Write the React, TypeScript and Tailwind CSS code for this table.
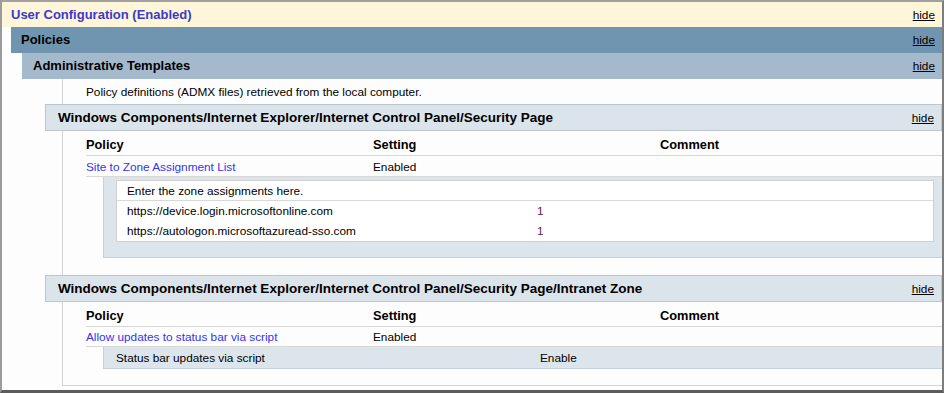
function Hide() {
  return <span className="text-[11.8px] font-normal leading-[14px] text-black underline">hide</span>;
}

function CategoryHeader({ title, className = '' }: { title: string; className?: string }) {
  return (
    <div
      className={`-ml-[18px] flex h-[27px] items-center justify-between border border-[#bcc6cf] bg-[#dce4eb] pl-[12px] pr-[7px] ${className}`}
    >
      <span className="text-[13.5px] font-bold leading-[16px] text-black">{title}</span>
      <Hide />
    </div>
  );
}

function TableHead() {
  return (
    <div className="grid h-[25px] grid-cols-[287px_287px_1fr] border-b border-[#d8d8d8] pt-[6px] text-[12.8px] font-bold leading-[16px] text-black">
      <span>Policy</span>
      <span>Setting</span>
      <span>Comment</span>
    </div>
  );
}

function PolicyRow({ name, setting, h, pt }: { name: string; setting: string; h: string; pt: string }) {
  return (
    <div className={`grid grid-cols-[287px_287px_1fr] border-b border-[#d8d8d8] leading-[14px] ${h} ${pt}`}>
      <span className="text-[#3333f0]">{name}</span>
      <span>{setting}</span>
      <span />
    </div>
  );
}

const zones = [
  { site: 'https://device.login.microsoftonline.com', value: '1' },
  { site: 'https://autologon.microsoftazuread-sso.com', value: '1' },
];

export default function App() {
  return (
    <div className="h-[393px] w-[944px] overflow-hidden border-t-2 border-r-2 border-b-[3px] border-l-2 border-t-[#a0a0a0] border-r-[#7d7d7d] border-b-[#5c5c5c] border-l-[#9b9b9b] bg-[#fdfdfd] font-['Liberation_Sans',Arial,sans-serif] text-[11.8px] text-black">
      {/* User Configuration */}
      <div className="flex h-[25px] items-center justify-between bg-[#fff6d9] pl-[9px] pr-[7px]">
        <span className="text-[13px] font-bold leading-[16px] text-[#3a3acc]">User Configuration (Enabled)</span>
        <Hide />
      </div>

      <div className="pl-[9px]">
        {/* Policies */}
        <div className="flex h-[26px] items-center justify-between bg-[#7095b0] pl-[10px] pr-[7px]">
          <span className="text-[13px] font-bold leading-[16px]">Policies</span>
          <Hide />
        </div>

        <div className="pl-[11px]">
          {/* Administrative Templates */}
          <div className="flex h-[26px] items-center justify-between bg-[#a4b9cb] pl-[11px] pr-[7px]">
            <span className="text-[13px] font-bold leading-[16px]">Administrative Templates</span>
            <Hide />
          </div>

          <div className="ml-[40px] h-[307px] border-b border-l border-[#d4d4d4]">
            <div className="h-[25px] pl-[23px] pt-[6px] leading-[14px]">
              Policy definitions (ADMX files) retrieved from the local computer.
            </div>

            <CategoryHeader title="Windows Components/Internet Explorer/Internet Control Panel/Security Page" />
            <div className="ml-[23px]">
              <TableHead />
              <PolicyRow name="Site to Zone Assignment List" setting="Enabled" h="h-[21px]" pt="pt-[4px]" />
              <div className="ml-[17px] border-b border-l border-[#c9d0d6] bg-[#dde5ec] pb-[15px] pl-[12px] pr-[8px] pt-[3px]">
                <div className="border border-[#d0d0d0] bg-white">
                  <div className="h-[20px] border-b border-[#d8d8d8] pl-[10px] pt-[3px] leading-[14px]">
                    Enter the zone assignments here.
                  </div>
                  {zones.map((z) => (
                    <div key={z.site} className="flex h-[20px] pl-[10px] pt-[3px] leading-[14px]">
                      <span className="w-[410px]">{z.site}</span>
                      <span className="text-[#5a1a5a]">{z.value}</span>
                    </div>
                  ))}
                </div>
              </div>
            </div>

            <CategoryHeader
              className="mt-[17px]"
              title="Windows Components/Internet Explorer/Internet Control Panel/Security Page/Intranet Zone"
            />
            <div className="ml-[23px]">
              <TableHead />
              <PolicyRow name="Allow updates to status bar via script" setting="Enabled" h="h-[20px]" pt="pt-[3px]" />
              <div className="ml-[17px] flex h-[22px] border-b border-l border-[#c9d0d6] bg-[#dde5ec] pl-[12px] pt-[4px] leading-[14px]">
                <span className="w-[424px]">Status bar updates via script</span>
                <span>Enable</span>
              </div>
            </div>
          </div>
        </div>
      </div>
    </div>
  );
}
